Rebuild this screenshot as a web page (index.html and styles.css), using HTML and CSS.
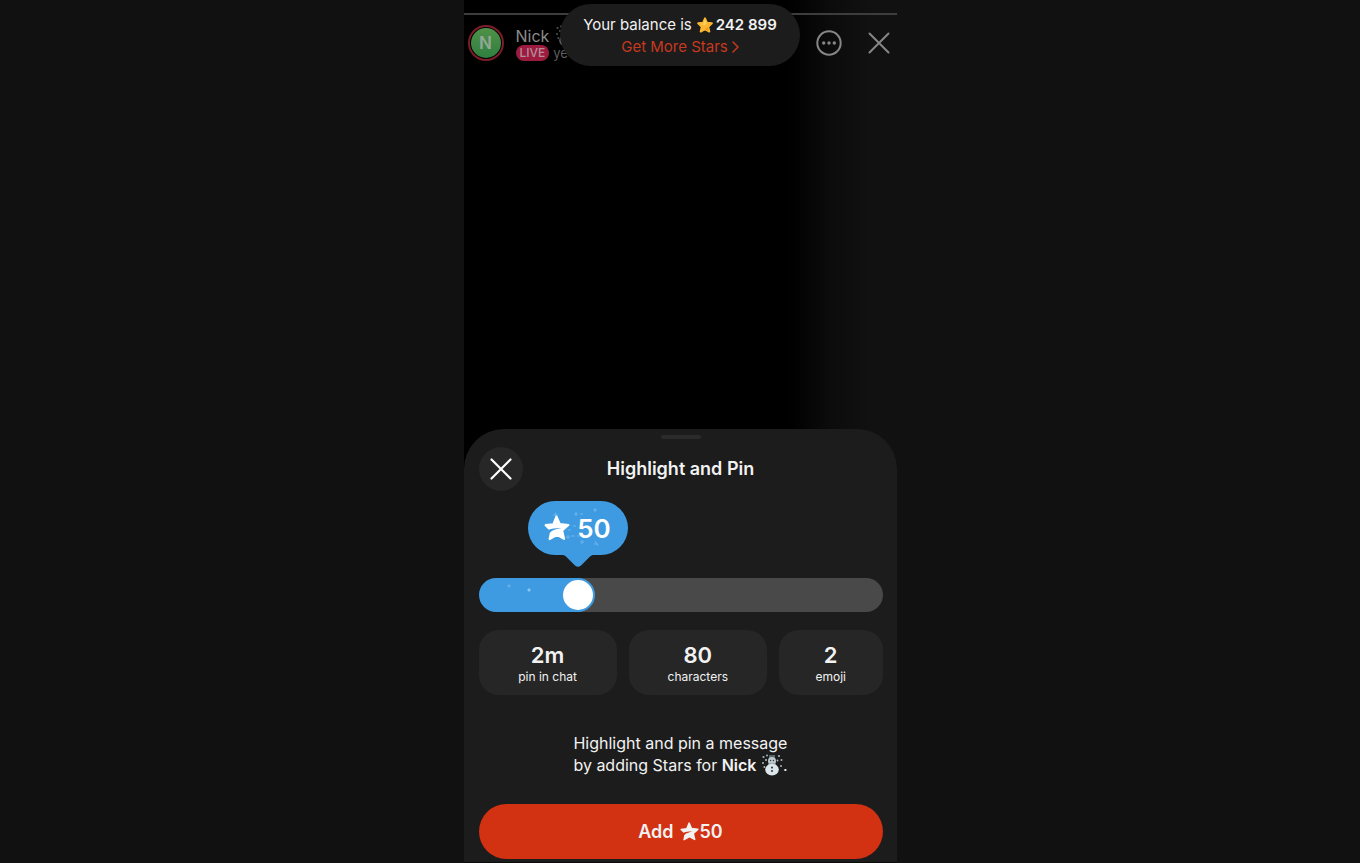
FILE: index.html
```html
<!DOCTYPE html>
<html lang="en">
<head>
<meta charset="utf-8">
<meta name="viewport" content="width=device-width, initial-scale=1">
<title>Highlight and Pin</title>
<link rel="stylesheet" href="styles.css">
</head>
<body>
<svg class="defs" aria-hidden="true">
  <symbol id="star" viewBox="0 0 24 24">
    <path fill="currentColor" stroke="currentColor" stroke-width="2" stroke-linejoin="round" d="M11.500 1.500 14.500 8.300 22.500 9.200 16.700 14.300 18.500 22 12 18.300 5.200 22.200 6.800 14.600 1.500 9.400 8.600 8.600Z"/>
    <path class="star-cut" d="M3.800 13.800C7.500 12.600 11.500 11.900 15.800 12.100 12 12.800 8.200 13.800 5.400 16.400Z"/>
  </symbol>
  <symbol id="snowman" viewBox="0 0 22 22">
    <g fill="#aab4bb"><circle cx="2.5" cy="3" r="1.1"/><circle cx="6" cy="1.6" r="1"/><circle cx="18" cy="2" r="1.1"/><circle cx="20.5" cy="6" r="1"/><circle cx="2" cy="9" r="1"/><circle cx="5" cy="6" r="1.1"/><circle cx="16.5" cy="6.5" r="1"/><circle cx="20" cy="12" r="1"/><circle cx="3.4" cy="13" r="1"/></g>
    <path d="M8 1h6v4H8z" fill="#59666c"/>
    <circle cx="11" cy="7" r="4" fill="#bcc8ce"/>
    <path d="M7 9.5h8v2H7z" fill="#75858d"/>
    <ellipse cx="11" cy="15.6" rx="6.8" ry="5.8" fill="#dbe5ea"/>
    <circle cx="9.6" cy="6.5" r=".7" fill="#333"/><circle cx="12.5" cy="6.5" r=".7" fill="#333"/>
    <circle cx="11" cy="13.6" r="1.1" fill="#38444b"/><circle cx="11" cy="17" r="1.1" fill="#38444b"/>
  </symbol>
</svg>
<main class="phone">
  <section class="stage">
    <div class="progress"></div>
    <header class="live-header">
      <div class="avatar"><span class="avatar-face">N</span></div>
      <div class="host">
        <div class="host-name">Nick <svg class="snow"><use href="#snowman"/></svg></div>
        <div class="host-meta"><span class="live">LIVE</span><span>ye</span></div>
      </div>
      <button class="icon-button" type="button" aria-label="More">
        <svg width="28" height="28" viewBox="0 0 28 28" fill="none" stroke="currentColor" stroke-width="2"><circle cx="14" cy="14" r="11.7"/><g fill="currentColor" stroke="none"><circle cx="8.7" cy="14" r="1.7"/><circle cx="14" cy="14" r="1.7"/><circle cx="19.3" cy="14" r="1.7"/></g></svg>
      </button>
      <button class="icon-button" type="button" aria-label="Close stream">
        <svg width="24" height="24" viewBox="0 0 24 24" fill="none" stroke="currentColor" stroke-width="2" stroke-linecap="round"><path d="M2.5 2.5l19 19M21.5 2.5l-19 19"/></svg>
      </button>
    </header>
    <div class="balance">
      <div class="balance-row">Your balance is
        <svg class="gold" viewBox="0 0 24 24"><path fill="#fdb62f" stroke="#fdb62f" stroke-width="3" stroke-linejoin="round" d="M12 2l3 6.7 7.3.8-5.4 5 1.5 7.3L12 18.1l-6.4 3.7 1.5-7.3-5.4-5L9 8.7z"/><path fill="#ffd35c" d="M12 3l2.2 6.3L12 12.500 5 10.500 9.600 9.500z"/><path fill="#ee9a1e" d="M12 18l5.500 3-1.500-6z"/></svg>
        <strong>242 899</strong></div>
      <a class="more-stars" href="#stars">Get More Stars
        <svg width="7" height="12" viewBox="0 0 7 12" fill="none" stroke="currentColor" stroke-width="1.5" stroke-linecap="round" stroke-linejoin="round"><path d="M1 1l5 5-5 5"/></svg>
      </a>
    </div>
  </section>

  <section class="sheet">
    <div class="handle"></div>
    <header class="sheet-header">
      <button class="close" type="button" aria-label="Close">
        <svg width="22" height="22" viewBox="0 0 22 22" fill="none" stroke="currentColor" stroke-width="2.2" stroke-linecap="round"><path d="M1.500 1.500l19 19M20.500 1.500l-19 19"/></svg>
      </button>
      <h1>Highlight and Pin</h1>
    </header>

    <div class="bubble-row">
      <div class="bubble">
        <svg class="bubble-shape" viewBox="0 0 100 66"><path fill="#3f9be1" d="M27 0H73A27 27 0 0 1 73 54H65Q63.500 54 62 55.500L53 64.500Q50 67 47 64.500L38 55.500Q36.500 54 35 54H27A27 27 0 0 1 27 0Z"/>
          <g stroke="#8bc7f2" stroke-width="1" opacity=".6"><path d="M25 14h5M27.500 11.500v5M65 9h4M67 7v4M46 13h4M48 11v4M52 13h3M38 36h4M40 34v4M43 35h4M52 41h4M54 39v4M67 40l3 5M66 43h4M45 25h3M40 29h3M49 35h3"/></g></svg>
        <div class="bubble-value"><svg class="bubble-star"><use href="#star"/></svg><output for="amount">50</output></div>
      </div>
    </div>
    <input class="slider" id="amount" type="range" min="1" max="220" value="50" aria-label="Stars to add">

    <div class="cards">
      <div class="card"><b>2m</b><span>pin in chat</span></div>
      <div class="card"><b>80</b><span>characters</span></div>
      <div class="card"><b>2</b><span>emoji</span></div>
    </div>

    <p class="description">Highlight and pin a message<br>by adding Stars for <b>Nick</b> <svg class="snow"><use href="#snowman"/></svg>.</p>

    <button class="add" type="button">Add <svg class="add-star"><use href="#star"/></svg>50</button>
  </section>
</main>
</body>
</html>
```

FILE: styles.css
```css
* { box-sizing: border-box; }
body {
  margin: 0;
  background: #111;
  color: #f2f2f2;
  font-family: Inter, "Liberation Sans", sans-serif;
}
button { border: 0; padding: 0; font: inherit; color: inherit; background: none; }
svg { display: block; flex: none; }
.defs { position: absolute; width: 0; height: 0; }
.star-cut { fill: var(--star-cut); }

.phone {
  display: flex;
  flex-direction: column;
  width: 100%;
  max-width: 433px;
  min-height: 100vh;
  margin: 0 auto;
  background: linear-gradient(90deg, #000 75%, #0b0b0b 84%, #111 94%);
}

/* Live stream behind the sheet */
.stage { position: relative; flex: 1; padding-top: 13px; }
.progress { height: 2px; background: #3d3d3d; }
.live-header {
  display: flex;
  align-items: center;
  height: 56px;
  padding: 0 4px;
  color: #868686;
}
.avatar {
  display: grid;
  place-items: center;
  width: 36px;
  height: 36px;
  border: 2px solid #7c1d28;
  border-radius: 50%;
}
.avatar-face {
  display: grid;
  place-items: center;
  width: 30px;
  height: 30px;
  border-radius: 50%;
  background: linear-gradient(#4f9147, #2f7f40);
  color: #94a896;
  font-size: 17px;
  font-weight: 600;
}
.host { flex: 1; margin: 2px 0 0 12px; font-size: 16px; line-height: 18px; }
.host-name { display: flex; gap: 6px; align-items: center; height: 18px; color: #8c8c8c; }
.host-name .snow { opacity: .45; }
.host-meta { display: flex; align-items: center; gap: 4px; font-size: 13px; line-height: 16px; color: #5e5e5e; }
.live {
  padding: 0 4px;
  border-radius: 8px;
  background: #9c1b3f;
  color: #b58e9a;
  font-size: 12px;
  font-weight: 500;
}
.icon-button { display: grid; place-items: center; width: 28px; height: 28px; }
.icon-button + .icon-button { margin-left: 22px; }
.snow { width: 22px; height: 22px; }

.balance {
  position: absolute;
  top: 4px;
  left: 50%;
  transform: translateX(-50%);
  width: 240px;
  height: 62px;
  padding-top: 10px;
  border-radius: 31px;
  background: #1c1c1c;
  font-size: 15px;
  line-height: 22px;
  white-space: nowrap;
}
.balance-row, .more-stars { display: flex; align-items: center; justify-content: center; }
.gold { width: 16px; height: 16px; margin: 0 3px 0 5px; }
.balance strong { font-weight: 600; }
.more-stars { gap: 4px; color: #c6391f; text-decoration: none; }

/* Bottom sheet */
.sheet {
  display: flex;
  flex-direction: column;
  padding: 6px 14px 3px 15px;
  border-bottom: 1px solid #0a0a0a;
  border-radius: 40px 40px 0 0;
  background: #1c1c1c;
}
.handle { align-self: center; width: 40px; height: 4px; border-radius: 2px; background: #2b2b2b; }
.sheet-header {
  display: grid;
  grid-template-columns: 44px 1fr 44px;
  align-items: center;
  margin-top: 8px;
}
.close { display: grid; place-items: center; width: 44px; height: 44px; border-radius: 50%; background: #272727; color: #fff; }
h1 { margin: 0; font-size: 18px; line-height: 24px; font-weight: 600; text-align: center; }

.bubble-row { margin-top: 10px; padding-left: 49px; }
.bubble { display: grid; width: 100px; height: 66px; }
.bubble-shape, .bubble-value { grid-area: 1 / 1; }
.bubble-value {
  --star-cut: #3f9be1;
  display: flex;
  align-items: center;
  justify-content: center;
  gap: 7px;
  height: 54px;
  color: #fff;
  font-size: 26px;
  font-weight: 600;
}
.bubble-star { width: 26px; height: 26px; }

.slider {
  appearance: none;
  width: 100%;
  height: 34px;
  margin: 11px 0 0;
  border-radius: 17px;
  background:
    radial-gradient(circle at 50px 12px, #8bc7f2 1px, transparent 2px),
    radial-gradient(circle at 30px 8px, #62b0ea 1px, transparent 2px),
    linear-gradient(90deg, #3f9be1 25%, #494949 25%);
}
.slider::-webkit-slider-thumb {
  appearance: none;
  width: 34px;
  height: 34px;
  border: 2px solid #3f9be1;
  border-radius: 50%;
  background: #fff;
}

.cards { display: grid; grid-template-columns: 4fr 4fr 3fr; gap: 12px; margin-top: 18px; }
.card {
  display: flex;
  flex-direction: column;
  align-items: center;
  padding: 12px 0 10px;
  border-radius: 20px;
  background: #262626;
  font-size: 12px;
  line-height: 17px;
}
.card b { font-size: 22px; line-height: 26px; font-weight: 600; }

.description { align-self: center; margin: 37px 0 0; font-size: 16px; line-height: 22px; }
.description b { font-weight: 600; }
.description .snow { display: inline-block; margin: -4px 0; vertical-align: -1px; }

.add {
  --star-cut: #d23112;
  display: flex;
  align-items: center;
  justify-content: center;
  width: 100%;
  height: 55px;
  margin-top: 28px;
  border-radius: 28px;
  background: #d23112;
  font-size: 18px;
  font-weight: 600;
}
.add-star { width: 19px; height: 19px; margin: 0 1px 0 6px; }
```
